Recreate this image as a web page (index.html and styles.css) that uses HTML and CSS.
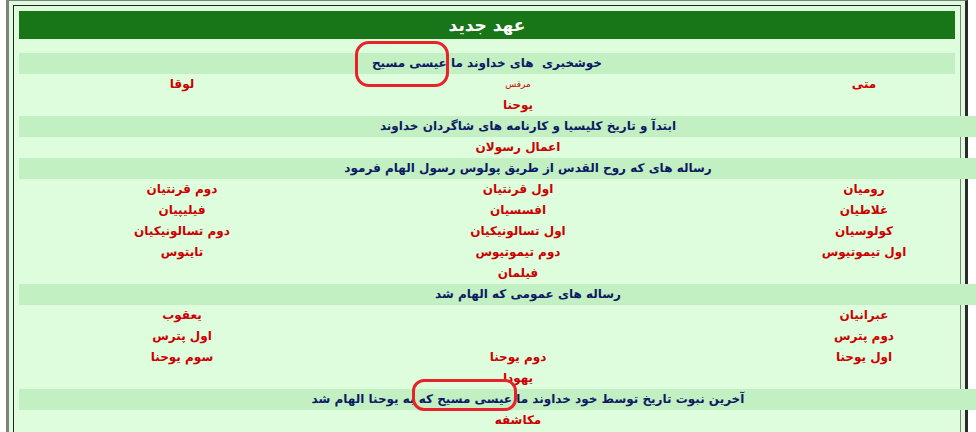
FILE: index.html
```html
<!DOCTYPE html>
<html lang="fa">
<head>
<meta charset="utf-8">
<title>عهد جدید</title>
<link rel="stylesheet" href="styles.css">
</head>
<body>
<div class="frame">
  <div class="inner">
    <div class="title">عهد جدید</div>
    <div class="bar bar-first">خوشخبری&nbsp; های خداوند ما عیسی مسیح</div>
    <div class="wide">
      <div class="row"><span>متی</span><span class="small">مرقس</span><span>لوقا</span></div>
      <div class="row"><span></span><span>یوحنا</span><span></span></div>
      <div class="bar">ابتدآ و تاریخ کلیسیا و کارنامه های شاگردان خداوند</div>
      <div class="row"><span></span><span>اعمال رسولان</span><span></span></div>
      <div class="bar">رساله های که روح القدس از طریق پولوس رسول الهام فرمود</div>
      <div class="row"><span>رومیان</span><span>اول قرنتیان</span><span>دوم قرنتیان</span></div>
      <div class="row"><span>غلاطیان</span><span>افسسیان</span><span>فیلیپیان</span></div>
      <div class="row"><span>کولوسیان</span><span>اول تسالونیکیان</span><span>دوم تسالونیکیان</span></div>
      <div class="row"><span>اول تیموتیوس</span><span>دوم تیموتیوس</span><span>تایتوس</span></div>
      <div class="row"><span></span><span>فیلمان</span><span></span></div>
      <div class="bar">رساله های عمومی که الهام شد</div>
      <div class="row"><span>عبرانیان</span><span></span><span>یعقوب</span></div>
      <div class="row"><span>دوم پترس</span><span></span><span>اول پترس</span></div>
      <div class="row"><span>اول یوحنا</span><span>دوم یوحنا</span><span>سوم یوحنا</span></div>
      <div class="row"><span></span><span>یهودا</span><span></span></div>
      <div class="bar">آخرین نبوت تاریخ توسط خود خداوند ما عیسی مسیح که به یوحنا الهام شد</div>
      <div class="row"><span></span><span>مکاشفه</span><span></span></div>
    </div>
  </div>
</div>
<div class="mark mark-one"></div>
<div class="mark mark-two"></div>
</body>
</html>
```

FILE: styles.css
```css
html, body {
  margin: 0;
  padding: 0;
  background: #ffffff;
}

body {
  overflow: hidden;
  font-family: "DejaVu Sans", "Noto Sans", sans-serif;
}

.frame {
  width: 948px;
  margin-left: 6px;
  padding: 4px;
  background: #ddfddd;
  border-top: 1px solid #808080;
  border-left: 3px solid #808080;
  border-right: 3px solid #2b2b2b;
}

.inner {
  padding: 5px;
  border-top: 1px solid #222222;
  border-left: 1px solid #222222;
  border-right: 1px solid #808080;
}

.title {
  height: 28px;
  line-height: 28px;
  background: #187518;
  color: #ffffff;
  font-weight: bold;
  font-size: 17px;
  text-align: center;
  direction: rtl;
}

.bar {
  height: 21px;
  line-height: 21px;
  background: #c2f0c2;
  color: #0d1a63;
  font-weight: bold;
  font-size: 12px;
  text-align: center;
  direction: rtl;
  white-space: nowrap;
}

.bar-first {
  margin-top: 14px;
}

.wide {
  width: 1018px;
}

.row {
  display: grid;
  grid-template-columns: 346px 346px 326px;
  direction: rtl;
  height: 21px;
  line-height: 21px;
  text-align: center;
  color: #cc0000;
  font-weight: bold;
  font-size: 12px;
  white-space: nowrap;
}

.row .small {
  font-size: 9px;
  font-weight: normal;
}

.mark {
  position: absolute;
  box-sizing: border-box;
  border: 3px solid #e8212b;
}

.mark-one {
  left: 355px;
  top: 41px;
  width: 94px;
  height: 46px;
  border-radius: 14px;
}

.mark-two {
  left: 412px;
  top: 379px;
  width: 105px;
  height: 32px;
  border-radius: 12px;
}
```
